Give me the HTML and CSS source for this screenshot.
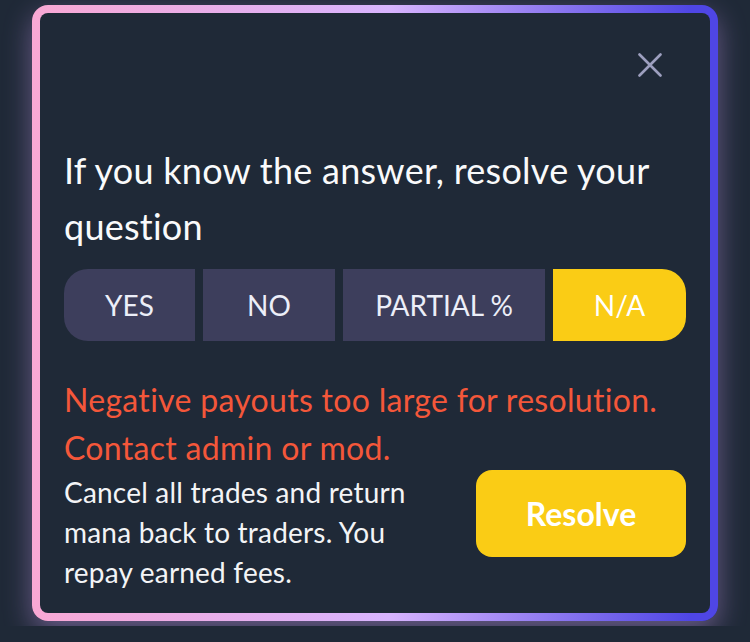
FILE: index.html
```html
<!DOCTYPE html>
<html>
	<head>
		<meta charset="utf-8">
		<title>Resolve</title>
		<link rel="stylesheet" href="styles.css">
	</head>
	<body>
		<div class="card">
			<div class="card-inner">
				<!--关闭按钮-->
				<div class="close-row">
					<button class="close-btn" type="button">
						<svg width="24" height="24" viewBox="0 0 24 24" fill="none" stroke="currentColor" stroke-width="2.6" stroke-linecap="round">
							<path d="M1.5 1.5 L22.5 22.5 M22.5 1.5 L1.5 22.5"/>
						</svg>
					</button>
				</div>

				<div class="title">If you know the answer, resolve your question</div>

				<!--选项按钮组-->
				<div class="choices">
					<a class="choice first" href="javascript:;">YES</a>
					<a class="choice" href="javascript:;">NO</a>
					<a class="choice" href="javascript:;">PARTIAL %</a>
					<a class="choice last active" href="javascript:;">N/A</a>
				</div>

				<div class="error">Negative payouts too large for resolution. Contact admin or mod.</div>

				<div class="bottom">
					<div class="desc">Cancel all trades and return mana back to traders. You repay earned fees.</div>
					<a class="resolve-btn" href="javascript:;">Resolve</a>
				</div>
			</div>
		</div>
	</body>
</html>
```

FILE: styles.css
```css
*{
	margin: 0px;
	padding: 0px;
	box-sizing: border-box;
}
body{
	background-color: #1f2937;
	padding: 5px 32px;
	font-family: "Lato", "Open Sans", sans-serif;
	color: #f3f4f6;
}
.card{
	border-radius: 16px;
	padding: 8px;
	background: linear-gradient(to right, #f9a8d4 0%, #d8b4fe 52%, #4f46e5 96%);
	box-shadow: 0 10px 28px rgba(196, 150, 235, 0.45);
}
.card-inner{
	background-color: #1f2937;
	border-radius: 8px;
	padding: 24px 24px 21px 24px;
}
.close-row{
	display: flex;
	justify-content: flex-end;
	height: 56px;
	align-items: center;
	padding-right: 24px;
}
.close-btn{
	background: none;
	border: none;
	color: #9d9fbf;
	display: block;
	width: 24px;
	height: 24px;
}
.close-btn svg{
	display: block;
}
.title{
	margin-top: 49px;
	font-size: 36px;
	line-height: 56px;
	letter-spacing: 0.25px;
	color: #f9fafb;
}
.choices{
	margin-top: 15px;
	display: grid;
	grid-template-columns: 131px 132px 202px 1fr;
	gap: 8px;
}
.choice{
	display: flex;
	align-items: center;
	justify-content: center;
	height: 72px;
	background-color: #3d3e5c;
	color: #eceef8;
	font-size: 28px;
	text-decoration: none;
}
.choice.first{
	border-radius: 24px 0 0 24px;
}
.choice.last{
	border-radius: 0 24px 24px 0;
}
.choice.active{
	background-color: #facc15;
	color: #ffffff;
}
.error{
	margin-top: 35px;
	font-size: 32px;
	line-height: 48px;
	letter-spacing: 0.3px;
	color: #f4573a;
}
.bottom{
	display: flex;
	justify-content: space-between;
	align-items: flex-start;
}
.desc{
	width: 380px;
	font-size: 28px;
	line-height: 40px;
	letter-spacing: 0.2px;
	color: #f3f4f6;
}
.resolve-btn{
	margin-top: -2px;
	width: 210px;
	height: 87px;
	border-radius: 16px;
	background-color: #facc15;
	color: #ffffff;
	font-size: 32px;
	font-weight: 700;
	text-decoration: none;
	display: flex;
	align-items: center;
	justify-content: center;
}
```
